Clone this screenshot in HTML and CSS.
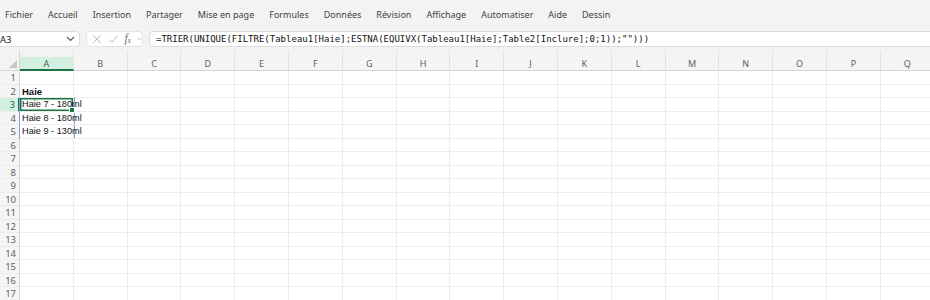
FILE: index.html
```html
<!DOCTYPE html>
<html lang="fr">
<head>
    <meta charset="UTF-8">
    <title>Classeur</title>
    <link rel="stylesheet" href="styles.css">
</head>
<body>
    <nav class="menubar">
        <span>Fichier</span>
        <span>Accueil</span>
        <span>Insertion</span>
        <span>Partager</span>
        <span>Mise en page</span>
        <span>Formules</span>
        <span>Données</span>
        <span>Révision</span>
        <span>Affichage</span>
        <span>Automatiser</span>
        <span>Aide</span>
        <span>Dessin</span>
    </nav>

    <div class="formulabar">
        <div class="namebox">
            <span>A3</span>
            <svg class="chev" width="9" height="6" viewBox="0 0 9 6"><path d="M1 1l3.5 3.5L8 1" fill="none" stroke="#555" stroke-width="1.1"/></svg>
        </div>
        <div class="fxbox">
            <svg width="10" height="10" viewBox="0 0 10 10"><path d="M1 1l8 8M9 1l-8 8" stroke="#b5b5b5" stroke-width="1"/></svg>
            <svg width="11" height="10" viewBox="0 0 11 10"><path d="M1 5.5l3 3L10 1.5" fill="none" stroke="#b5b5b5" stroke-width="1"/></svg>
            <span class="fx">f<sub>x</sub></span>
            <svg width="5" height="4" viewBox="0 0 5 4"><path d="M.5 1l2 2 2-2" fill="none" stroke="#b5b5b5" stroke-width=".8"/></svg>
        </div>
        <div class="formula">=TRIER(UNIQUE(FILTRE(Tableau1[Haie];ESTNA(EQUIVX(Tableau1[Haie];Table2[Inclure];0;1));"")))</div>
    </div>

    <div class="sheet" id="sheet"></div>

    <script>
        const cols = 'ABCDEFGHIJKLMNOPQ'.split('');
        const data = { 'A2': 'Haie', 'A3': 'Haie 7 - 180ml', 'A4': 'Haie 8 - 180ml', 'A5': 'Haie 9 - 130ml' };
        const sheet = document.getElementById('sheet');

        // header row
        let html = '<div class="corner"><span class="tri"></span></div>';
        cols.forEach(c => {
            html += `<div class="colhead${c === 'A' ? ' sel' : ''}">${c}</div>`;
        });

        for (let r = 1; r <= 17; r++) {
            html += `<div class="rowhead${r === 3 ? ' sel' : ''}">${r}</div>`;
            cols.forEach(c => {
                const ref = c + r;
                let cls = 'cell';
                if (ref === 'A2') cls += ' bold';
                let inner = data[ref] || '';
                if (ref === 'A3') {
                    cls += ' active';
                    inner += '<span class="spill"></span><span class="handle"></span>';
                }
                html += `<div class="${cls}">${inner}</div>`;
            });
        }
        sheet.innerHTML = html;
    </script>
</body>
</html>
```

FILE: styles.css
```css
body {
    margin: 0;
    background: #f3f3f3;
    font-family: 'Noto Sans', sans-serif;
    overflow: hidden;
}

.menubar {
    height: 29px;
    display: flex;
    align-items: center;
    gap: 15px;
    padding-left: 5px;
    font-size: 9px;
    color: #424242;
}

.formulabar {
    height: 21px;
    display: flex;
    align-items: flex-start;
    padding-top: 2px;
    box-sizing: border-box;
}

.namebox {
    width: 80px;
    height: 16px;
    box-sizing: border-box;
    background: #fff;
    border: 1px solid #dcdcdc;
    border-left: none;
    border-radius: 0 4px 4px 0;
    display: flex;
    align-items: center;
    justify-content: space-between;
    padding-right: 4px;
    font-size: 9.5px;
    color: #222;
}

.fxbox {
    margin-left: 6px;
    width: 57px;
    height: 16px;
    box-sizing: border-box;
    background: #fff;
    border: 1px solid #e3e3e3;
    border-radius: 4px;
    display: flex;
    align-items: center;
    gap: 6px;
    padding-left: 5px;
}

.fx {
    font-family: 'Liberation Serif', serif;
    font-style: italic;
    font-size: 11.5px;
    color: #6f6f6f;
    line-height: 1;
}

.fx sub {
    font-size: 8px;
    vertical-align: -1px;
}

.formula {
    margin-left: 6px;
    flex: 1;
    height: 16px;
    box-sizing: border-box;
    background: #fff;
    border: 1px solid #dcdcdc;
    border-right: none;
    border-radius: 4px 0 0 4px;
    padding-left: 6px;
    font-family: 'DejaVu Sans Mono', monospace;
    font-size: 9px;
    line-height: 14px;
    color: #111;
    white-space: nowrap;
}

.sheet {
    display: grid;
    grid-template-columns: 20px repeat(17, 53.8px);
    grid-template-rows: 21px;
    grid-auto-rows: 13.5px;
    background: #fff;
    font-family: 'Liberation Sans', sans-serif;
}

.corner {
    background: #f3f3f3;
    border-right: 1px solid #d6d6d6;
    border-bottom: 1px solid #d6d6d6;
    position: relative;
}

.tri {
    position: absolute;
    right: 2px;
    bottom: 2px;
    border-left: 8px solid transparent;
    border-bottom: 8px solid #c8c8c8;
}

.colhead {
    background: linear-gradient(to bottom, #f3f3f3 7px, #f5f5f5 7px);
    border-right: 1px solid #e2e2e2;
    border-bottom: 1px solid #d6d6d6;
    font-family: 'Noto Sans', sans-serif;
    font-size: 9px;
    color: #616161;
    text-align: center;
    line-height: 13px;
    padding-top: 7px;
    box-sizing: border-box;
}

.colhead.sel {
    background: linear-gradient(to bottom, #f3f3f3 7px, #d3efdf 7px);
    border-bottom: 2px solid #1a7343;
    color: #1a7343;
}

.rowhead {
    background: #f5f5f5;
    border-right: 1px solid #d6d6d6;
    border-bottom: 1px solid #ececec;
    font-family: 'Noto Sans', sans-serif;
    font-size: 9.5px;
    color: #616161;
    text-align: right;
    padding-right: 3px;
    line-height: 13px;
}

.rowhead.sel {
    background: #d3efdf;
    border-right: 2px solid #1a7343;
    color: #1a7343;
}

.cell {
    border-right: 1px solid #ececec;
    border-bottom: 1px solid #ececec;
    font-size: 9.2px;
    line-height: 13px;
    padding-left: 2px;
    color: #111;
    white-space: nowrap;
    position: relative;
}

.cell.bold {
    font-weight: bold;
    font-size: 9.5px;
}

.cell.active {
    box-shadow: inset 0 0 0 1.5px #1a7343;
}

.spill {
    position: absolute;
    left: -1px;
    top: -1px;
    width: 54px;
    height: 40px;
    border: 1px solid #7d9edb;
    border-top-color: transparent;
    pointer-events: none;
}

.handle {
    position: absolute;
    right: -2px;
    bottom: -2px;
    width: 4px;
    height: 4px;
    background: #1a7343;
    border: 1px solid #fff;
    z-index: 1;
}
```
